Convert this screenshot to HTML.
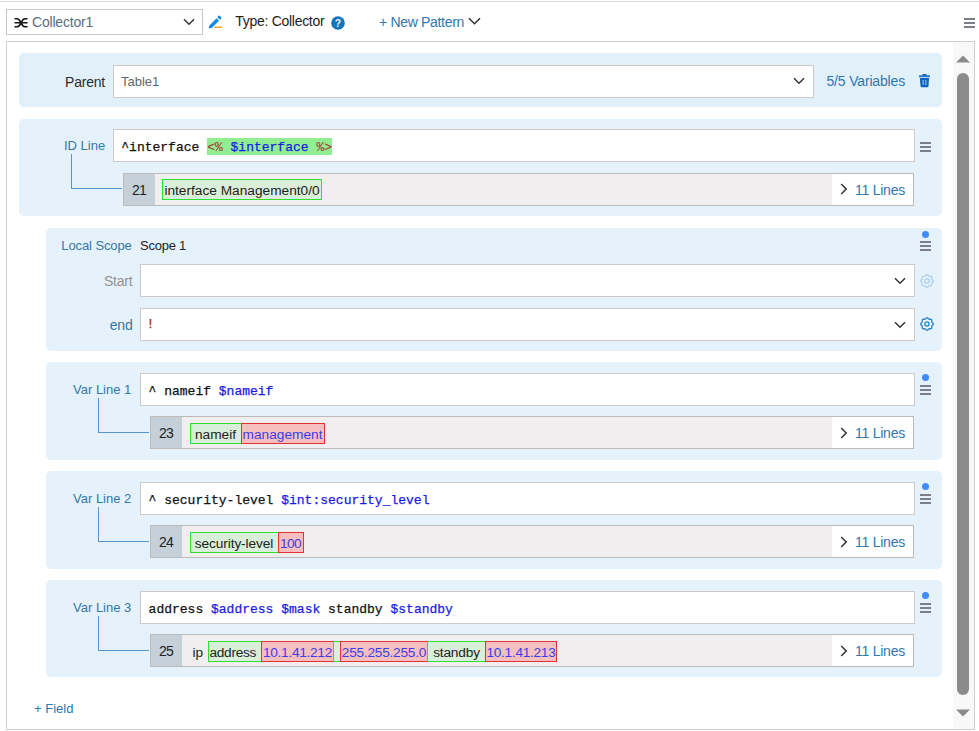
<!DOCTYPE html>
<html>
<head>
<meta charset="utf-8">
<title>Collector Pattern Editor</title>
<style>
html,body{margin:0;padding:0;background:#fff;}
body{width:979px;height:731px;position:relative;overflow:hidden;font-family:"Liberation Sans",sans-serif;font-size:13px;color:#222;}
.abs{position:absolute;}
.topline{left:0;top:1px;width:979px;height:1px;background:#dcdcdc;}
.sel{box-sizing:border-box;border:1px solid #c6c6c6;background:#fff;}
.main{left:6px;top:41px;width:969px;height:689px;box-sizing:border-box;border:1px solid #cfcfcf;background:#fff;}
.panel{background:#e5f2fb;border-radius:5px;}
.inp{box-sizing:border-box;border:1px solid #cfcaca;background:#fff;height:32.5px;}
.lbl{white-space:nowrap;line-height:16px;}
.blue{color:#2e78ae;}
.lblue{color:#3378a6;}
.mono{font-family:"Liberation Mono",monospace;font-size:13px;letter-spacing:0;white-space:pre;line-height:16px;color:#111;-webkit-text-stroke:0.25px;}
.var{color:#1a1ae6;}
.tag{color:#a23a3a;-webkit-text-stroke:0.1px;}
.hl{background:#90ee90;padding:2px 0 0 0;}
.row{box-sizing:border-box;border:1px solid #bdbaba;background:#f0eeee;height:32.5px;}
.num{position:absolute;left:0;top:0;bottom:0;width:31px;background:#c5d0d9;text-align:center;line-height:33px;font-size:14px;letter-spacing:-0.8px;text-indent:-0.8px;color:#222;}
.lines{position:absolute;right:0;top:0;bottom:0;width:81px;background:#fff;}
.smp{position:absolute;top:6px;height:21px;box-sizing:border-box;font-size:13.7px;line-height:22.5px;text-align:center;white-space:nowrap;}
.g{border:1px solid #30e030;background:#d9efd9;color:#222;}
.r{border:1px solid #e23232;background:#f5bfbf;color:#3d3de6;}
.conn{border-left:1px solid #5596d0;border-bottom:1px solid #5596d0;}
.bar{position:absolute;left:0;width:11px;height:2px;background:#7b8088;}
.dot{width:7px;height:7px;border-radius:50%;background:#3f8cff;}
</style>
</head>
<body>
<div class="abs topline"></div>

<!-- toolbar -->
<div class="abs sel" style="left:6px;top:9px;width:197px;height:26px;"></div>
<svg class="abs" style="left:13.5px;top:17px;" width="15" height="12" viewBox="0 0 15 12"><path d="M0.5 1.8 H3 C7.2 1.8 6.8 9.8 11 9.8 H13.6 M0.5 9.8 H3 C7.2 9.8 6.8 1.8 11 1.8 H13.6 M0.5 5.8 H13.6" fill="none" stroke="#1a1a1a" stroke-width="1.6"/></svg>
<div class="abs lbl" style="left:32px;top:14px;color:#5d6c7c;font-size:14px;letter-spacing:-0.2px;">Collector1</div>
<svg class="abs" style="left:183px;top:18px;" width="12" height="8" viewBox="0 0 12 8"><path d="M1 1.2 L6 6.2 L11 1.2" fill="none" stroke="#333" stroke-width="1.5"/></svg>
<svg class="abs" style="left:207px;top:13px;" width="17" height="17" viewBox="0 0 17 17"><path d="M1.9 15.2 Q1.7 13.2 2.6 12.3 L9.6 5.3 L12 7.7 L5 14.7 Q4.1 15.5 1.9 15.2 Z" fill="#118af0"/><rect x="-1.85" y="-1.4" width="3.7" height="2.8" rx="0.9" transform="translate(12.5 4.5) rotate(45)" fill="#118af0"/><rect x="7.1" y="13.4" width="8.2" height="1.6" rx="0.5" fill="#f3a62e"/></svg>
<div class="abs lbl" style="left:235.3px;top:13px;color:#222;font-size:14px;letter-spacing:-0.29px;">Type: Collector</div>
<svg class="abs" style="left:330.7px;top:15.7px;" width="14" height="14" viewBox="0 0 14 14"><circle cx="7" cy="7" r="6.8" fill="#1275b8"/><text x="7" y="10.7" text-anchor="middle" font-family="Liberation Sans, sans-serif" font-size="10.5" font-weight="bold" fill="#e8f2fa">?</text></svg>
<div class="abs lbl blue" style="left:379px;top:13.5px;font-size:14px;letter-spacing:-0.32px;">+ New Pattern</div>
<svg class="abs" style="left:468px;top:17px;" width="13" height="9" viewBox="0 0 13 9"><path d="M1 1.2 L6.5 6.7 L12 1.2" fill="none" stroke="#333" stroke-width="1.6"/></svg>
<div class="abs" style="left:964px;top:17px;width:11px;height:12px;"><div class="bar" style="top:0.5px"></div><div class="bar" style="top:4.5px"></div><div class="bar" style="top:8.5px"></div></div>

<!-- main container -->
<div class="abs main"></div>

<!-- scrollbar -->
<div class="abs" style="left:953px;top:42px;width:21px;height:687px;background:#f8f8f8;"></div>
<svg class="abs" style="left:955px;top:55px;" width="16" height="8" viewBox="0 0 16 8"><path d="M1 7.5 L8 0.5 L15 7.5 Z" fill="#8a8a8a"/></svg>
<div class="abs" style="left:957px;top:73px;width:12px;height:622px;border-radius:6px;background:#8b8b8b;"></div>
<svg class="abs" style="left:955px;top:709px;" width="16" height="8" viewBox="0 0 16 8"><path d="M1 0.5 L8 7.5 L15 0.5 Z" fill="#8a8a8a"/></svg>

<!-- Parent panel -->
<div class="abs panel" style="left:19px;top:53px;width:923px;height:54px;background:#e2f0fa;"></div>
<div class="abs lbl" style="left:65px;top:73.5px;color:#2c2c2c;font-size:14px;letter-spacing:-0.2px;">Parent</div>
<div class="abs inp" style="left:113px;top:65px;width:700.5px;"></div>
<div class="abs lbl" style="left:121px;top:74px;color:#666;">Table1</div>
<svg class="abs" style="left:793px;top:77px;" width="12" height="8" viewBox="0 0 12 8"><path d="M1 1.2 L6 6.2 L11 1.2" fill="none" stroke="#333" stroke-width="1.5"/></svg>
<div class="abs lbl blue" style="left:826.5px;top:72.5px;font-size:14px;letter-spacing:-0.17px;">5/5 Variables</div>
<svg class="abs" style="left:918px;top:73px;" width="13" height="15" viewBox="0 0 13 15"><rect x="4.2" y="0.9" width="4.6" height="2.4" rx="1" fill="#0e62c0"/><rect x="0.9" y="2.2" width="11.1" height="2.1" rx="0.6" fill="#2a78cc"/><path d="M1.9 4.9 H11.1 L10.5 12.9 Q10.4 14.2 9.2 14.2 H3.8 Q2.6 14.2 2.5 12.9 Z" fill="#0e62c0"/><rect x="4.4" y="7" width="1.6" height="5" fill="#6ea6e0"/><rect x="7" y="7" width="1.6" height="5" fill="#6ea6e0"/></svg>

<!-- ID Line panel -->
<div class="abs panel" style="left:19px;top:119px;width:923px;height:97px;"></div>
<div class="abs lbl lblue" style="left:64px;top:138px;">ID Line</div>
<div class="abs inp" style="left:113px;top:129px;width:802px;height:32.5px;"></div>
<div class="abs mono" style="left:121.3px;top:139.5px;">^interface <span class="hl"><span class="tag">&lt;%</span> <span class="var">$interface</span> <span class="tag">%&gt;</span></span></div>
<div class="abs" style="left:920px;top:141px;width:11px;height:12px;"><div class="bar" style="top:0.5px"></div><div class="bar" style="top:4.5px"></div><div class="bar" style="top:8.5px"></div></div>
<div class="abs conn" style="left:71px;top:154px;width:50px;height:34px;"></div>
<div class="abs row" style="left:123px;top:173px;width:791px;">
  <div class="num">21</div>
  <div class="smp g" style="left:38px;width:160px;top:5px;">interface Management0/0</div>
  <div class="lines"></div>
</div>
<svg class="abs" style="left:840px;top:183px;" width="8" height="12" viewBox="0 0 8 12"><path d="M1.2 1 L6.2 6 L1.2 11" fill="none" stroke="#333" stroke-width="1.5"/></svg>
<div class="abs lbl blue" style="left:855px;top:182px;font-size:14px;letter-spacing:-0.24px;">11 Lines</div>

<!-- Local Scope panel -->
<div class="abs panel" style="left:46px;top:227.5px;width:896px;height:123.5px;"></div>
<div class="abs lbl lblue" style="left:61.3px;top:238px;letter-spacing:-0.1px;">Local Scope</div>
<div class="abs lbl" style="left:140px;top:238px;color:#222;letter-spacing:-0.24px;">Scope 1</div>
<div class="abs dot" style="left:922px;top:231px;"></div>
<div class="abs" style="left:920px;top:240px;width:11px;height:12px;"><div class="bar" style="top:0.5px"></div><div class="bar" style="top:4.5px"></div><div class="bar" style="top:8.5px"></div></div>
<div class="abs lbl" style="left:60px;width:72.5px;text-align:right;top:272.5px;color:#939393;font-size:14px;letter-spacing:-0.2px;">Start</div>
<div class="abs inp" style="left:140px;top:264px;width:775px;"></div>
<svg class="abs" style="left:894px;top:277px;" width="12" height="8" viewBox="0 0 12 8"><path d="M1 1.2 L6 6.2 L11 1.2" fill="none" stroke="#333" stroke-width="1.5"/></svg>
<svg class="abs" style="left:918.7px;top:272.6px;" width="16" height="16" viewBox="0 0 16 16"><g fill="none" stroke="#a9cdea" stroke-width="1.2" stroke-linejoin="round"><path d="M14.30 8.00 L14.21 8.41 L13.97 8.79 L13.64 9.12 L13.29 9.42 L12.99 9.70 L12.80 9.99 L12.73 10.33 L12.74 10.74 L12.78 11.19 L12.78 11.67 L12.68 12.11 L12.45 12.45 L12.11 12.68 L11.67 12.78 L11.19 12.78 L10.74 12.74 L10.33 12.73 L9.99 12.80 L9.70 12.99 L9.42 13.29 L9.12 13.64 L8.79 13.97 L8.41 14.21 L8.00 14.30 L7.59 14.21 L7.21 13.97 L6.88 13.64 L6.58 13.29 L6.30 12.99 L6.01 12.80 L5.67 12.73 L5.26 12.74 L4.81 12.78 L4.33 12.78 L3.89 12.68 L3.55 12.45 L3.32 12.11 L3.22 11.67 L3.22 11.19 L3.26 10.74 L3.27 10.33 L3.20 9.99 L3.01 9.70 L2.71 9.42 L2.36 9.12 L2.03 8.79 L1.79 8.41 L1.70 8.00 L1.79 7.59 L2.03 7.21 L2.36 6.88 L2.71 6.58 L3.01 6.30 L3.20 6.01 L3.27 5.67 L3.26 5.26 L3.22 4.81 L3.22 4.33 L3.32 3.89 L3.55 3.55 L3.89 3.32 L4.33 3.22 L4.81 3.22 L5.26 3.26 L5.67 3.27 L6.01 3.20 L6.30 3.01 L6.58 2.71 L6.88 2.36 L7.21 2.03 L7.59 1.79 L8.00 1.70 L8.41 1.79 L8.79 2.03 L9.12 2.36 L9.42 2.71 L9.70 3.01 L9.99 3.20 L10.33 3.27 L10.74 3.26 L11.19 3.22 L11.67 3.22 L12.11 3.32 L12.45 3.55 L12.68 3.89 L12.78 4.33 L12.78 4.81 L12.74 5.26 L12.73 5.67 L12.80 6.01 L12.99 6.30 L13.29 6.58 L13.64 6.88 L13.97 7.21 L14.21 7.59 Z"/><circle cx="8" cy="8" r="2.1"/></g></svg>
<div class="abs lbl lblue" style="left:60px;width:72.5px;text-align:right;top:316.5px;font-size:14px;letter-spacing:-0.2px;">end</div>
<div class="abs inp" style="left:140px;top:308px;width:775px;"></div>
<div class="abs mono" style="left:146.5px;top:317px;color:#a01a3a;">!</div>
<svg class="abs" style="left:894px;top:321px;" width="12" height="8" viewBox="0 0 12 8"><path d="M1 1.2 L6 6.2 L11 1.2" fill="none" stroke="#333" stroke-width="1.5"/></svg>
<svg class="abs" style="left:918.7px;top:316px;" width="16" height="16" viewBox="0 0 16 16"><g fill="none" stroke="#2f84c0" stroke-width="1.35" stroke-linejoin="round"><path d="M14.30 8.00 L14.21 8.41 L13.97 8.79 L13.64 9.12 L13.29 9.42 L12.99 9.70 L12.80 9.99 L12.73 10.33 L12.74 10.74 L12.78 11.19 L12.78 11.67 L12.68 12.11 L12.45 12.45 L12.11 12.68 L11.67 12.78 L11.19 12.78 L10.74 12.74 L10.33 12.73 L9.99 12.80 L9.70 12.99 L9.42 13.29 L9.12 13.64 L8.79 13.97 L8.41 14.21 L8.00 14.30 L7.59 14.21 L7.21 13.97 L6.88 13.64 L6.58 13.29 L6.30 12.99 L6.01 12.80 L5.67 12.73 L5.26 12.74 L4.81 12.78 L4.33 12.78 L3.89 12.68 L3.55 12.45 L3.32 12.11 L3.22 11.67 L3.22 11.19 L3.26 10.74 L3.27 10.33 L3.20 9.99 L3.01 9.70 L2.71 9.42 L2.36 9.12 L2.03 8.79 L1.79 8.41 L1.70 8.00 L1.79 7.59 L2.03 7.21 L2.36 6.88 L2.71 6.58 L3.01 6.30 L3.20 6.01 L3.27 5.67 L3.26 5.26 L3.22 4.81 L3.22 4.33 L3.32 3.89 L3.55 3.55 L3.89 3.32 L4.33 3.22 L4.81 3.22 L5.26 3.26 L5.67 3.27 L6.01 3.20 L6.30 3.01 L6.58 2.71 L6.88 2.36 L7.21 2.03 L7.59 1.79 L8.00 1.70 L8.41 1.79 L8.79 2.03 L9.12 2.36 L9.42 2.71 L9.70 3.01 L9.99 3.20 L10.33 3.27 L10.74 3.26 L11.19 3.22 L11.67 3.22 L12.11 3.32 L12.45 3.55 L12.68 3.89 L12.78 4.33 L12.78 4.81 L12.74 5.26 L12.73 5.67 L12.80 6.01 L12.99 6.30 L13.29 6.58 L13.64 6.88 L13.97 7.21 L14.21 7.59 Z"/><circle cx="8" cy="8" r="2.1"/></g></svg>

<!-- Var Line 1 -->
<div class="abs panel" style="left:46px;top:362px;width:896px;height:97.5px;"></div>
<div class="abs lbl lblue" style="left:73px;top:382px;">Var Line 1</div>
<div class="abs inp" style="left:140px;top:373px;width:775px;"></div>
<div class="abs mono" style="left:148.6px;top:383.5px;">^ nameif <span class="var">$nameif</span></div>
<div class="abs dot" style="left:922px;top:374px;"></div>
<div class="abs" style="left:920px;top:384px;width:11px;height:12px;"><div class="bar" style="top:0.5px"></div><div class="bar" style="top:4.5px"></div><div class="bar" style="top:8.5px"></div></div>
<div class="abs conn" style="left:98px;top:398px;width:50px;height:34px;"></div>
<div class="abs row" style="left:150px;top:416px;width:764px;">
  <div class="num">23</div>
  <div class="smp g" style="left:38.5px;width:52px;">nameif</div>
  <div class="smp r" style="left:89.5px;width:84px;">management</div>
  <div class="lines"></div>
</div>
<svg class="abs" style="left:840px;top:426.5px;" width="8" height="12" viewBox="0 0 8 12"><path d="M1.2 1 L6.2 6 L1.2 11" fill="none" stroke="#333" stroke-width="1.5"/></svg>
<div class="abs lbl blue" style="left:855px;top:425px;font-size:14px;letter-spacing:-0.24px;">11 Lines</div>

<!-- Var Line 2 -->
<div class="abs panel" style="left:46px;top:471px;width:896px;height:97.5px;"></div>
<div class="abs lbl lblue" style="left:73px;top:491px;">Var Line 2</div>
<div class="abs inp" style="left:140px;top:482px;width:775px;"></div>
<div class="abs mono" style="left:148.6px;top:492.5px;">^ security-level <span class="var">$int:security_level</span></div>
<div class="abs dot" style="left:922px;top:483px;"></div>
<div class="abs" style="left:920px;top:493px;width:11px;height:12px;"><div class="bar" style="top:0.5px"></div><div class="bar" style="top:4.5px"></div><div class="bar" style="top:8.5px"></div></div>
<div class="abs conn" style="left:98px;top:507px;width:50px;height:34px;"></div>
<div class="abs row" style="left:150px;top:525px;width:764px;">
  <div class="num">24</div>
  <div class="smp g" style="left:38.5px;width:89px;letter-spacing:-0.1px;">security-level</div>
  <div class="smp r" style="left:126.5px;width:26px;letter-spacing:-0.6px;">100</div>
  <div class="lines"></div>
</div>
<svg class="abs" style="left:840px;top:535.5px;" width="8" height="12" viewBox="0 0 8 12"><path d="M1.2 1 L6.2 6 L1.2 11" fill="none" stroke="#333" stroke-width="1.5"/></svg>
<div class="abs lbl blue" style="left:855px;top:534px;font-size:14px;letter-spacing:-0.24px;">11 Lines</div>

<!-- Var Line 3 -->
<div class="abs panel" style="left:46px;top:580px;width:896px;height:97px;"></div>
<div class="abs lbl lblue" style="left:73px;top:600px;">Var Line 3</div>
<div class="abs inp" style="left:140px;top:591px;width:775px;"></div>
<div class="abs mono" style="left:148.6px;top:601.5px;">address <span class="var">$address</span> <span class="var">$mask</span> standby <span class="var">$standby</span></div>
<div class="abs dot" style="left:922px;top:592px;"></div>
<div class="abs" style="left:920px;top:602px;width:11px;height:12px;"><div class="bar" style="top:0.5px"></div><div class="bar" style="top:4.5px"></div><div class="bar" style="top:8.5px"></div></div>
<div class="abs conn" style="left:98px;top:616px;width:50px;height:34px;"></div>
<div class="abs row" style="left:150px;top:634px;width:764px;">
  <div class="num">25</div>
  <div class="smp" style="left:41.5px;color:#222;line-height:24.5px;">ip</div>
  <div class="smp g" style="left:57px;width:54px;text-align:left;padding-left:0.5px;letter-spacing:-0.3px;">address</div>
  <div class="smp r" style="left:110px;width:73px;letter-spacing:-0.3px;">10.1.41.212</div>
  <div class="smp g" style="left:182px;width:8px;"></div>
  <div class="smp r" style="left:189px;width:88px;letter-spacing:-0.25px;">255.255.255.0</div>
  <div class="smp g" style="left:276px;width:59px;letter-spacing:-0.17px;">standby</div>
  <div class="smp r" style="left:334px;width:72px;letter-spacing:-0.3px;">10.1.41.213</div>
  <div class="lines"></div>
</div>
<svg class="abs" style="left:840px;top:644.5px;" width="8" height="12" viewBox="0 0 8 12"><path d="M1.2 1 L6.2 6 L1.2 11" fill="none" stroke="#333" stroke-width="1.5"/></svg>
<div class="abs lbl blue" style="left:855px;top:643px;font-size:14px;letter-spacing:-0.24px;">11 Lines</div>

<div class="abs lbl blue" style="left:34px;top:701px;">+ Field</div>
</body>
</html>
